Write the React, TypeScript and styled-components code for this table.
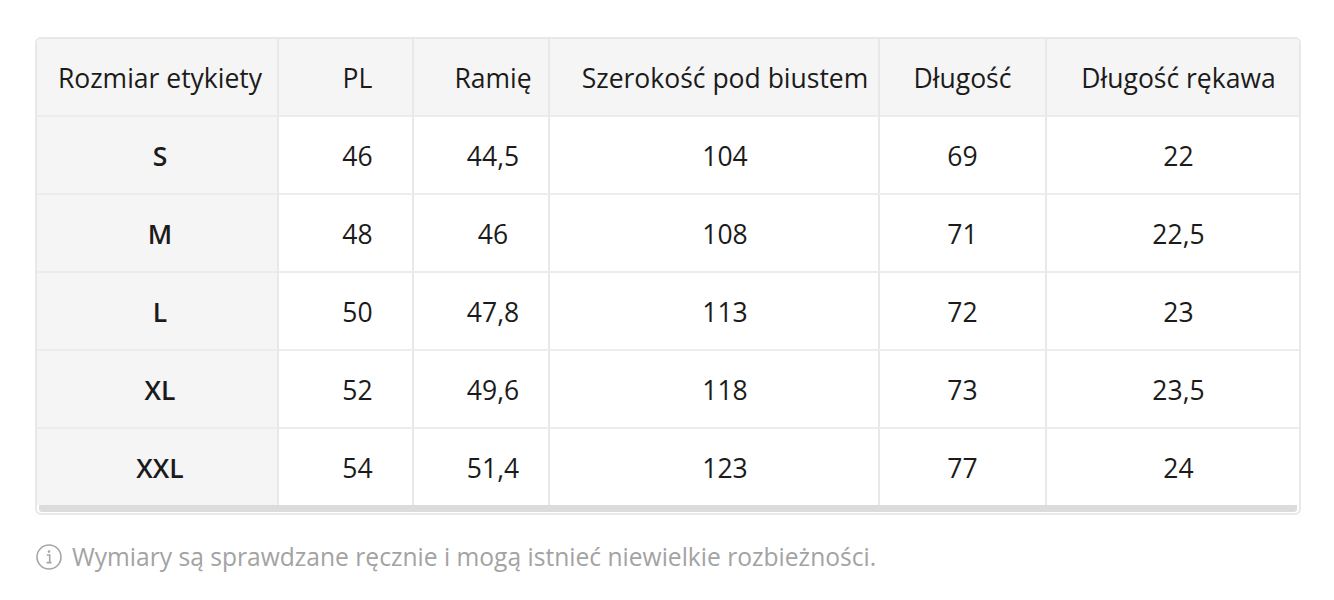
import styled, { createGlobalStyle } from 'styled-components';

const GlobalStyle = createGlobalStyle`
  body {
    margin: 0;
    background: #ffffff;
    font-family: 'Open Sans', 'Noto Sans', sans-serif;
  }
`;

const columns = [
  { label: 'Rozmiar etykiety', width: 242, shift: 6 },
  { label: 'PL', width: 135, shift: 24 },
  { label: 'Ramię', width: 136, shift: 24 },
  { label: 'Szerokość pod biustem', width: 330, shift: 22 },
  { label: 'Długość', width: 167, shift: 0 },
  { label: 'Długość rękawa', width: 255, shift: 8 },
];

const rows = [
  ['S', '46', '44,5', '104', '69', '22'],
  ['M', '48', '46', '108', '71', '22,5'],
  ['L', '50', '47,8', '113', '72', '23'],
  ['XL', '52', '49,6', '118', '73', '23,5'],
  ['XXL', '54', '51,4', '123', '77', '24'],
];

function App() {
  return (
    <>
      <GlobalStyle />
      <Page>
        <TableBox>
          <Grid>
            {columns.map((c, i) => (
              <HeadCell key={c.label} $shift={c.shift} $first={i === 0}>
                {c.label}
              </HeadCell>
            ))}
            {rows.map((r) =>
              r.map((v, i) => (
                <Cell
                  key={r[0] + i}
                  $shift={columns[i].shift}
                  $first={i === 0}
                >
                  {v}
                </Cell>
              ))
            )}
          </Grid>
          <ScrollTrack />
        </TableBox>
        <Note>
          <svg width='26' height='26' viewBox='0 0 26 26' fill='none'>
            <circle cx='13' cy='13' r='12' stroke='#a6a6a6' strokeWidth='1.6' />
            <circle cx='13' cy='7.6' r='1.3' fill='#a6a6a6' />
            <path
              d='M10.8 11h2.9v7.4M10.6 18.6h5'
              stroke='#a6a6a6'
              strokeWidth='1.6'
            />
          </svg>
          <span>Wymiary są sprawdzane ręcznie i mogą istnieć niewielkie rozbieżności.</span>
        </Note>
      </Page>
    </>
  );
}

const Page = styled.div`
  padding: 37px 33px 0 35px;
`;

const TableBox = styled.div`
  width: 1262px;
  border: 2px solid #e8e8e8;
  border-radius: 6px;
  overflow: hidden;
  background: #ffffff;
`;

const Grid = styled.div`
  display: grid;
  grid-template-columns: ${columns.map((c) => `${c.width}px`).join(' ')};
  grid-template-rows: 76px;
  grid-auto-rows: 78px;
`;

const BaseCell = styled.div<{ $shift: number; $first: boolean }>`
  display: flex;
  align-items: center;
  justify-content: center;
  padding-left: ${(p) => p.$shift}px;
  padding-top: 2px;
  font-size: 26.5px;
  color: #1b1b1b;
  border-right: 2px solid #e8e8e8;
  border-top: 2px solid #ececec;
  white-space: nowrap;
  box-sizing: border-box;

  &:nth-child(6n) {
    border-right: none;
  }
`;

const HeadCell = styled(BaseCell)`
  background: #f5f5f5;
  border-top: none;
`;

const Cell = styled(BaseCell)`
  background: ${(p) => (p.$first ? '#f5f5f5' : '#ffffff')};
  font-weight: ${(p) => (p.$first ? 600 : 400)};
`;

const ScrollTrack = styled.div`
  height: 7px;
  margin: 0 2px 1px;
  background: #dcdcdc;
  border-radius: 0 0 3px 3px;
`;

const Note = styled.div`
  display: flex;
  align-items: center;
  gap: 10px;
  margin-top: 25px;
  padding-left: 1px;
  color: #a3a3a3;
  font-size: 24.6px;
`;

export default App;
